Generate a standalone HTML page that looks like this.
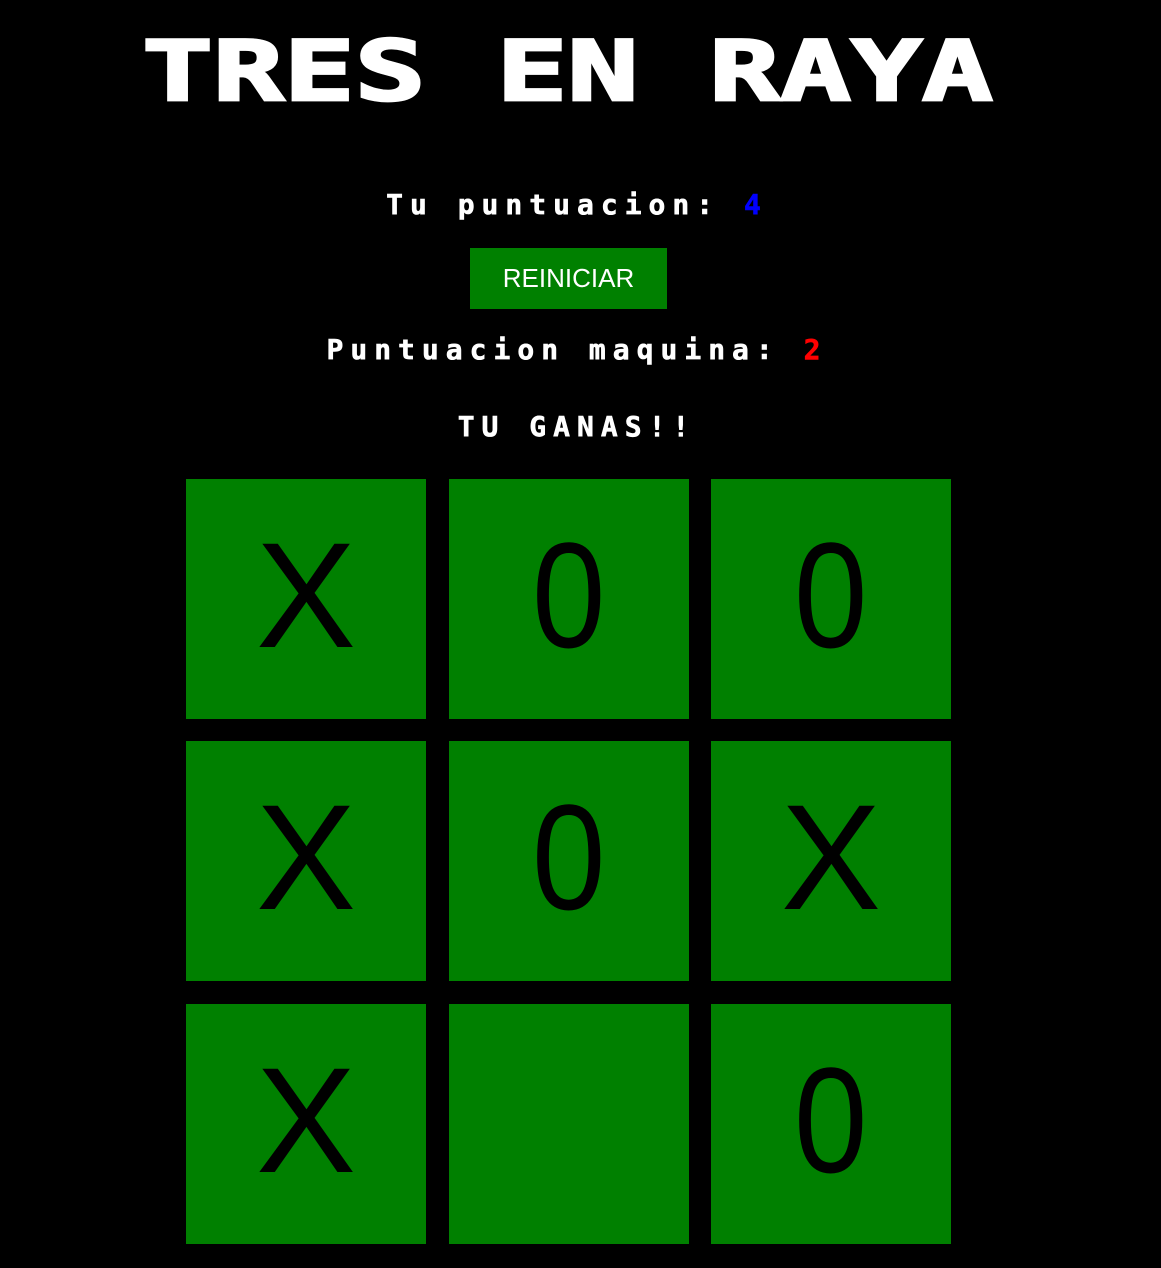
<!DOCTYPE html>
<html><head><meta charset="utf-8"><style>
html,body{margin:0;padding:0;background:#000;width:1161px;height:1268px;overflow:hidden;position:relative}
.t{position:absolute;left:0;width:1161px;text-align:center;color:#fff;font-family:"DejaVu Sans Mono","Liberation Mono",monospace;font-weight:bold;white-space:pre}
.title{top:26px;left:-13px;font-size:92px;line-height:92px;transform:scale(1.28,0.9);-webkit-text-stroke:3px #fff}
.s{font-size:28px;line-height:30px;letter-spacing:7px;-webkit-text-stroke:0.6px currentColor;padding-right:7px;box-sizing:border-box}
.btn{position:absolute;left:470px;top:248px;width:197px;height:61px;background:#008000;color:#fff;font-family:"Liberation Sans",sans-serif;font-size:26px;line-height:61px;text-align:center}
.c{position:absolute;width:240px;height:240px;background:#008000;color:#000;font-family:"Liberation Sans",sans-serif;font-size:150px;line-height:232px;text-align:center}
.o{display:inline-block;transform:scaleX(0.88)}
</style></head><body>
<div class="t title">TRES EN RAYA</div>
<div class="t s" style="top:190px">Tu puntuacion: <span style="color:#0000ff">4</span></div>
<div class="btn">REINICIAR</div>
<div class="t s" style="top:335px">Puntuacion maquina: <span style="color:#ff0000">2</span></div>
<div class="t s" style="top:412px">TU GANAS!!</div>
<div class="c" style="left:186px;top:479px">X</div>
<div class="c" style="left:449px;top:479px"><span class="o">0</span></div>
<div class="c" style="left:711px;top:479px"><span class="o">0</span></div>
<div class="c" style="left:186px;top:741px">X</div>
<div class="c" style="left:449px;top:741px"><span class="o">0</span></div>
<div class="c" style="left:711px;top:741px">X</div>
<div class="c" style="left:186px;top:1004px">X</div>
<div class="c" style="left:449px;top:1004px"></div>
<div class="c" style="left:711px;top:1004px"><span class="o">0</span></div>
</body></html>
